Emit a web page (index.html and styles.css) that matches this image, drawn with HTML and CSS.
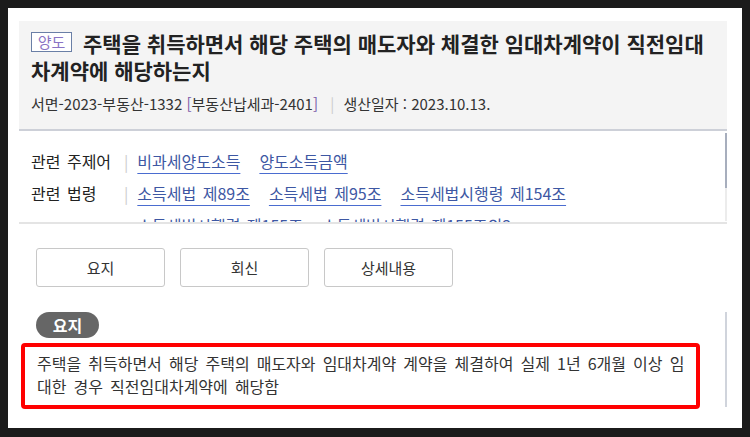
FILE: index.html
```html
<!DOCTYPE html>
<html lang="ko">
<head>
    <meta charset="UTF-8">
    <meta name="viewport" content="width=device-width, initial-scale=1.0">
    <title>질의회신 상세</title>
    <link rel="stylesheet" href="styles.css">
</head>
<body>
    <div class="page">
        <div class="head">
            <h1 class="title"><span class="badge">양도</span>주택을 취득하면서 해당 주택의 매도자와 체결한 임대차계약이 직전임대차계약에 해당하는지</h1>
            <p class="meta">
                <span>서면-2023-부동산-1332 <span class="br">[</span>부동산납세과-2401<span class="br">]</span></span>
                <span class="sep">|</span>
                <span>생산일자 : 2023.10.13.</span>
            </p>
        </div>

        <div class="related">
            <div class="related-inner">
                <div class="rel-row">
                    <span class="rel-label">관련 주제어</span>
                    <span class="sep">|</span>
                    <div class="rel-links">
                        <a href="#">비과세양도소득</a>
                        <a href="#">양도소득금액</a>
                    </div>
                </div>
                <div class="rel-row">
                    <span class="rel-label">관련 법령</span>
                    <span class="sep">|</span>
                    <div class="rel-links">
                        <a href="#">소득세법 제89조</a>
                        <a href="#">소득세법 제95조</a>
                        <a href="#">소득세법시행령 제154조</a>
                        <a href="#">소득세법시행령 제155조</a>
                        <a href="#">소득세법시행령 제155조의3</a>
                    </div>
                </div>
            </div>
        </div>

        <div class="tabs">
            <button class="tab">요지</button>
            <button class="tab">회신</button>
            <button class="tab">상세내용</button>
        </div>

        <div class="summary">
            <span class="pill">요지</span>
            <div class="summary-box">
                주택을 취득하면서 해당 주택의 매도자와 임대차계약 계약을 체결하여 실제 1년 6개월 이상 임대한 경우 직전임대차계약에 해당함
            </div>
        </div>
    </div>
</body>
</html>
```

FILE: styles.css
```css
body {
    margin: 0;
    padding: 8px 8px 9px 8px;
    background-color: #1b1b1b;
    font-family: "Noto Sans CJK KR", "Noto Sans", sans-serif;
    color: #222;
}
.page {
    height: 420px;
    background-color: #fff;
    padding: 13px 15px 0 11px;
    box-sizing: border-box;
    overflow: hidden;
}
.head {
    background-color: #f4f4f4;
    border-bottom: 2px solid #cdd0d8;
    padding: 9px 12px 15px;
}
.title {
    margin: 0;
    font-size: 21px;
    line-height: 27px;
    font-weight: bold;
    color: #222;
}
.badge {
    display: inline-block;
    box-sizing: border-box;
    width: 41px;
    height: 20px;
    margin-right: 11px;
    border: 1px solid #6a7fa6;
    background-color: #fff;
    color: #8a73c4;
    font-size: 15px;
    font-weight: normal;
    line-height: 18px;
    text-align: center;
    vertical-align: 4px;
}
.meta {
    margin: 10px 0 0;
    font-size: 15px;
    line-height: 20px;
    color: #333;
}
.meta .br {
    color: #7a5aa8;
}
.sep {
    color: #ccc;
    margin: 0 5px 0 8px;
}
.related {
    position: relative;
    height: 91px;
    border-bottom: 2px solid #e4e4e4;
    overflow: hidden;
}
.related::after {
    content: "";
    position: absolute;
    top: 2px;
    right: 0;
    width: 2px;
    height: 88px;
    background-color: #ececec;
}
.related::before {
    content: "";
    position: absolute;
    top: 2px;
    right: 0;
    width: 2px;
    height: 55px;
    background-color: #a7aebd;
    z-index: 1;
}
.related-inner {
    padding: 14px 12px 0;
}
.rel-row {
    display: flex;
    align-items: flex-start;
    font-size: 16px;
    line-height: 32px;
}
.rel-label {
    width: 93px;
    flex-shrink: 0;
    word-spacing: 2px;
}
.rel-row .sep {
    margin: 0 9px 0 0;
}
.rel-links {
    display: flex;
    flex-wrap: wrap;
    column-gap: 19px;
    word-spacing: 2px;
}
.rel-links a {
    color: #3d57a3;
    text-decoration: underline;
    text-decoration-color: #4a6cd0;
    text-underline-offset: 5px;
}
.tabs {
    display: flex;
    gap: 15px;
    padding: 24px 0 0 17px;
}
.tab {
    width: 129px;
    height: 39px;
    background-color: #fff;
    border: 1px solid #c8c8c8;
    border-radius: 3px;
    font-family: inherit;
    font-size: 15px;
    color: #333;
}
.summary {
    margin-top: 25px;
    border-right: 2px solid #d0d4dc;
    height: 95px;
}
.pill {
    display: inline-block;
    margin-left: 17px;
    width: 63px;
    height: 26px;
    border-radius: 13px;
    background-color: #666;
    color: #fff;
    font-size: 16px;
    font-weight: bold;
    line-height: 26px;
    text-align: center;
}
.summary-box {
    width: 679px;
    box-sizing: border-box;
    margin: 5px 0 0 2px;
    padding: 5px 8px 7px 12px;
    border: 4px solid #ff0000;
    border-radius: 4px;
    font-size: 16px;
    line-height: 23px;
    color: #333;
    word-spacing: 2.6px;
    word-break: break-all;
}
```
